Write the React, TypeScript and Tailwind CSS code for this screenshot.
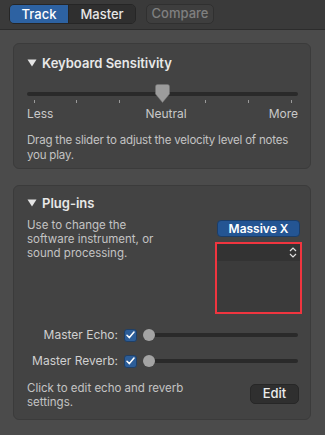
import React from "react"

const font = { fontFamily: "Inter, 'Liberation Sans', sans-serif" }

const Disclosure = ({ title }: { title: string }) => (
  <div className="flex items-center h-4">
    <svg width="10" height="8" viewBox="0 0 10 8" className="mr-[5px]">
      <path d="M0.5 0.5 L9.5 0.5 L5 7.5 Z" fill="#e4e4e4" />
    </svg>
    <span className="text-[13px] font-semibold text-[#e8e8e8] leading-4">{title}</span>
  </div>
)

const SensitivitySlider = () => {
  const ticks = [7, 49, 92, 178, 221, 264]
  return (
    <div className="relative h-[40px] mt-[11px]">
      <div className="absolute left-0 right-0 top-[10px] h-[4px] rounded-full bg-[#2a2a2a]" />
      {ticks.map((x) => (
        <div key={x} className="absolute top-[18px] w-px h-[3px] bg-[#9a9a9a]" style={{ left: x }} />
      ))}
      <svg width="15" height="19" viewBox="0 0 15 19" className="absolute left-[128px] top-[2px]">
        <path d="M2.5 0.5 H12.5 A2 2 0 0 1 14.5 2.5 V10 L7.5 18.5 L0.5 10 V2.5 A2 2 0 0 1 2.5 0.5 Z" fill="#9c9c9c" stroke="#777" strokeWidth="0.5" />
      </svg>
      <div className="absolute left-0 right-0 top-[24px] flex justify-between text-[12px] text-[#c9c9c9] leading-4">
        <span>Less</span>
        <span className="ml-[10px]">Neutral</span>
        <span>More</span>
      </div>
    </div>
  )
}

const ToggleRow = ({ label }: { label: string }) => (
  <div className="flex items-center h-4">
    <span className="w-[91px] text-right text-[12px] text-[#d0d0d0] leading-4 whitespace-nowrap">{label}</span>
    <div className="ml-[6px] w-[13px] h-[13px] rounded-[3px] bg-[#2c5d98] border border-[#1f3f66] flex items-center justify-center">
      <svg width="9" height="8" viewBox="0 0 9 8">
        <path d="M1 4.2 L3.4 6.6 L8 1" fill="none" stroke="#fff" strokeWidth="1.5" strokeLinecap="round" strokeLinejoin="round" />
      </svg>
    </div>
    <div className="relative flex-1 ml-[6px] h-[12px] flex items-center">
      <div className="absolute left-[6px] right-0 h-[4px] rounded-full bg-[#2a2a2a]" />
      <div className="relative w-[12px] h-[12px] rounded-full bg-[#a4a4a4]" />
    </div>
  </div>
)

export default function App() {
  return (
    <div className="w-[325px] h-[435px] bg-[#4b4b4b] overflow-hidden" style={font}>
      <div className="h-[30px] bg-[#3a3a3a] border-b border-[#2c2c2c] flex items-start pt-[4px] pl-[9px]">
        <div className="flex h-[20px] rounded-[5px] border border-[#262626] overflow-hidden text-[13px] font-medium leading-none">
          <div className="w-[58px] bg-[#2d62a2] text-white flex items-center justify-center">Track</div>
          <div className="w-[67px] bg-[#2f2f2f] text-[#e6e6e6] flex items-center justify-center border-l border-[#262626]">Master</div>
        </div>
        <div className="ml-[10px] w-[68px] h-[20px] rounded-[5px] border border-[#303030] bg-[#3e3e3e] text-[#808080] text-[13px] font-medium flex items-center justify-center">
          Compare
        </div>
      </div>

      <div className="flex flex-col pl-[13px] pt-[13px] gap-[16px]">
        <div className="w-[298px] h-[126px] rounded-[6px] bg-[#434343] border border-[#3b3b3b] pl-[13px] pr-[8px] pt-[11px]">
          <Disclosure title="Keyboard Sensitivity" />
          <div className="pr-[4px]">
            <SensitivitySlider />
          </div>
          <p className="mt-[11px] text-[11.5px] tracking-[-0.2px] leading-[15px] text-[#c4c4c4]">
            Drag the slider to adjust the velocity level of notes you play.
          </p>
        </div>

        <div className="w-[298px] h-[235px] rounded-[6px] bg-[#434343] border border-[#3b3b3b] pl-[13px] pr-[8px] pt-[9px]">
          <Disclosure title="Plug-ins" />
          <div className="flex justify-between mt-[7px]">
            <p className="text-[11.5px] leading-[14px] text-[#c4c4c4] w-[135px]">
              Use to change the software instrument, or sound processing.
            </p>
            <div className="flex flex-col items-center w-[87px] pt-[2px]">
              <div className="w-[83px] h-[17px] rounded-[4px] bg-[#245593] border border-[#1b3d68] text-white text-[12px] font-semibold flex items-center justify-center">
                Massive X
              </div>
              <div className="mt-[5px] w-[87px] h-[72px] border-2 border-[#f0353f] bg-[#3b3b3b] flex flex-col">
                <div className="h-[17px] bg-[#333333] flex items-center justify-end pr-[3px]">
                  <svg width="8" height="11" viewBox="0 0 8 11">
                    <path d="M1 4 L4 1 L7 4 M1 7 L4 10 L7 7" fill="none" stroke="#e0e0e0" strokeWidth="1.2" />
                  </svg>
                </div>
              </div>
            </div>
          </div>
          <div className="mt-[13px] pr-[4px] flex flex-col gap-[10px]">
            <ToggleRow label="Master Echo:" />
            <ToggleRow label="Master Reverb:" />
          </div>
          <div className="mt-[12px] flex justify-between items-start pr-[3px]">
            <p className="text-[11.5px] leading-[14px] text-[#c4c4c4] w-[180px]">
              Click to edit echo and reverb settings.
            </p>
            <div className="mt-[3px] w-[49px] h-[20px] rounded-[5px] bg-[#2f2f2f] border border-[#272727] text-[#ececec] text-[13px] font-medium flex items-center justify-center">
              Edit
            </div>
          </div>
        </div>
      </div>
    </div>
  )
}
